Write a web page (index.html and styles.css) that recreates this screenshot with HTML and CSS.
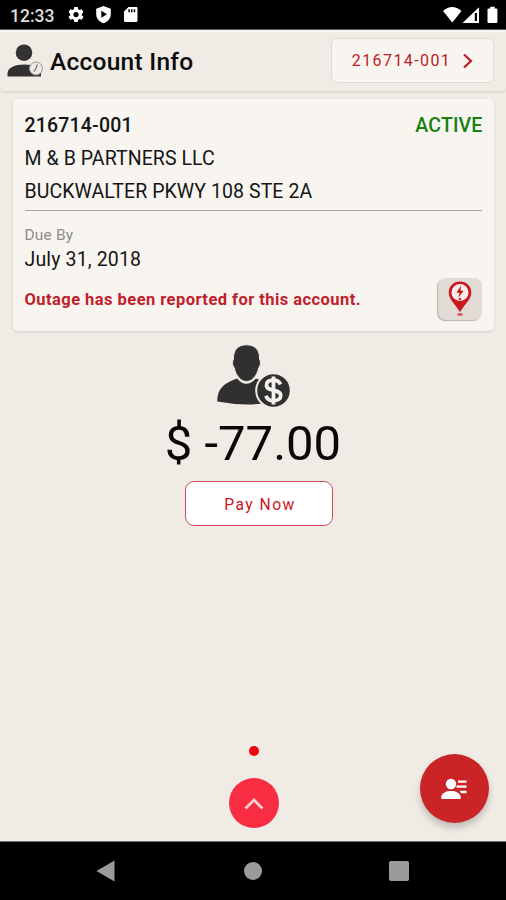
FILE: index.html
```html
<!DOCTYPE html>
<html lang="en">
<head>
<meta charset="utf-8">
<title>Account Info</title>
<link rel="stylesheet" href="styles.css">
</head>
<body>
<div class="status">
  <span class="clock">12:33</span>
  <svg class="status-left" width="72" height="18" viewBox="0 0 72 18" fill="#fff">
    <path fill-rule="evenodd" d="M6.3 1h3.4l.5 2.2 1.3.8 2.2-.8 1.8 3-1.7 1.5v1.6l1.7 1.5-1.8 3-2.2-.7-1.3.7-.5 2.3H6.3l-.5-2.3-1.3-.7-2.2.7-1.8-3 1.700-1.500V7.700L.5 6.200l1.800-3 2.200.8 1.300-.8zM8 6a2.600 2.600 0 1 0 0 5.200A2.600 2.600 0 0 0 8 6z"/>
    <path fill-rule="evenodd" d="M35.500 0 42.800 2.800V8c0 4.500-3 7.800-7.300 9.300C31.200 15.800 28.200 12.500 28.200 8V2.800zM33.300 4.800v7l5.700-3.500z"/>
    <path fill-rule="evenodd" d="M60.500 1h7.700q1.300 0 1.300 1.300v12.400q0 1.300-1.300 1.300H57.300Q56 16 56 14.700V5.500zM60.300 3.300v3h1.500v-3zm2.700 0v3h1.500v-3zm2.700 0v3h1.500v-3z"/>
  </svg>
  <svg class="status-right" width="56" height="18" viewBox="0 0 56 18" fill="#fff">
    <path d="M0 5Q9-3 18.500 5L9.300 16.500z"/>
    <path fill-rule="evenodd" d="M36 1.300V17H19.500zM31.800 7v8H34V7z"/>
    <path d="M47.200.8h4.500v1.700h1.700q1 0 1 1v12.500q0 1-1 1h-7.900q-1 0-1-1V3.500q0-1 1-1h1.700z"/>
  </svg>
</div>
<header class="bar">
  <svg class="bar-icon" width="37" height="34" viewBox="0 0 37 34">
    <circle cx="17" cy="8.700" r="8.300" fill="#333"/>
    <path d="M.5 32.500V29C1 23.500 8 20.500 17 20.500S33.500 23.500 34 29v3.500z" fill="#303030"/>
    <circle cx="29" cy="24.500" r="6.500" fill="#ece8e3" stroke="#9a9691" stroke-width="1"/>
    <path d="M30.300 20.500 28.700 25.200 26.800 27.500" fill="none" stroke="#77736f" stroke-width="1.200"/>
  </svg>
  <h1>Account Info</h1>
  <button class="account">216714-001
    <svg width="10" height="16" viewBox="0 0 10 16" fill="none" stroke="#bd1b24" stroke-width="2.200"><path d="M1 1.500 8 8 1 14.500"/></svg>
  </button>
</header>
<main>
  <section class="card">
    <div class="row"><b class="number">216714-001</b><b class="active">ACTIVE</b></div>
    <p class="line name">M &amp; B PARTNERS LLC</p>
    <p class="line address">BUCKWALTER PKWY 108 STE 2A</p>
    <div class="due">Due By</div>
    <div class="date">July 31, 2018</div>
    <div class="outage">
      <b>Outage has been reported for this account.</b>
      <span class="pin">
        <svg width="24" height="36" viewBox="0 0 24 36">
          <path d="M12 .500C5.500.500.700 5.300.700 11.500.700 18 7 23 12 31 17 23 23.300 18 23.300 11.500 23.300 5.300 18.500.500 12 .500z" fill="#c81920"/>
          <circle cx="12" cy="11.500" r="8.500" fill="#f8ece8"/>
          <path d="M13 4.500 8.500 11.500l3 .5-1 4.500 5-6.500-3-.5z" fill="#c81920"/>
          <circle cx="12" cy="18" r="1.200" fill="#c81920"/>
          <ellipse cx="12" cy="33.500" rx="2.800" ry="1.300" fill="#d6474a"/>
        </svg>
      </span>
    </div>
  </section>
  <svg class="payer" width="76" height="66" viewBox="0 0 76 66">
    <path d="M1.300 57.500C1 45 8 39 21 34.500Q30 45 40 34.500C52 38 59 43 59 58Q30 63 1.300 57.500z" fill="#303030"/>
    <path d="M30.500.8C39 .8 44 6 43.500 15c1.500 2 1.300 7-.8 9C41 32 36 37.500 30.500 37.500S20 32 18.300 24c-2.100-2-2.300-7-.8-9C17 6 22 .8 30.500.8z" fill="#303030" stroke="#f0ebe5" stroke-width="1"/>
    <circle cx="57.500" cy="46.500" r="17.300" fill="#303030" stroke="#f0ebe5" stroke-width="2"/>
    <path d="M64.500 40.500C63 37 60 36.200 57.500 36.200c-4.500 0-7 2-7 5.100 0 7 14.200 3.200 14.200 10.200 0 3.200-2.700 5.300-7.200 5.300-3.500 0-6.500-1.500-7.500-5M57.500 32.500v28" fill="none" stroke="#f4f0eb" stroke-width="3.800"/>
  </svg>
  <div class="amount">$ -77.00</div>
  <button class="pay">Pay Now</button>
  <div class="bottom">
    <i class="dot"></i>
    <button class="up" aria-label="Expand">
      <svg width="20" height="13" viewBox="0 0 20 13" fill="none" stroke="#ffd0d4" stroke-width="2.800"><path d="M1.500 11.500 10 3l8.500 8.500"/></svg>
    </button>
  </div>
  <button class="fab" aria-label="Contacts">
    <svg width="26" height="22" viewBox="0 0 26 22" fill="#fff">
      <circle cx="10" cy="6" r="5.200"/>
      <path d="M.3 21v-2.500C1 15 5 13 10 13s9 2 9.700 5.500V21z"/>
      <path d="M17 2.500h8.500v2.200H17zM15.500 7.500h10v2.200h-10zM18.500 12.700h7v2.600h-5.300z"/>
    </svg>
  </button>
</main>
<nav>
  <svg width="20" height="22" viewBox="0 0 20 22" fill="#9b9b9b"><path d="M.5 11 18.500.5v21z"/></svg>
  <i class="home"></i>
  <i class="recent"></i>
</nav>
</body>
</html>
```
FILE: styles.css
```css
* { box-sizing: border-box; }
body {
  margin: 0;
  height: 900px;
  display: flex;
  flex-direction: column;
  overflow: hidden;
  background: #f0ebe5;
  color: #151515;
  font-family: Roboto, "Liberation Sans", sans-serif;
}
button { font-family: inherit; padding: 0; display: flex; align-items: center; justify-content: center; }
svg { display: block; flex: none; }
p, h1 { margin: 0; }
.status {
  height: 30px;
  flex: none;
  background: #000;
  border-bottom: 1px solid #444;
  display: flex;
  padding: 6px 7px 0 10px;
}
.clock { width: 58px; color: #ddd; font-size: 17.500px; line-height: 20px; font-weight: 500; white-space: nowrap; }
.status-right { margin-left: auto; }
.bar {
  height: 61px;
  flex: none;
  display: flex;
  align-items: center;
  padding: 0 12px 0 7px;
  border-radius: 0 0 4px 4px;
  box-shadow: inset 0 2px 1px #f8f5f1, 0 1px 3px #d2cdc7;
}
h1 { margin: 2px 0 0 6px; font-size: 24.500px; line-height: 30px; font-weight: 500; letter-spacing: .25px; color: #0c0c0c; white-space: nowrap; }
.account {
  width: 163px;
  height: 45px;
  margin-left: auto;
  gap: 12px;
  border: 1px solid #dfdad5;
  border-radius: 6px;
  background: #f8f5f1;
  color: #bd1b24;
  font-size: 16px;
  letter-spacing: 1.400px;
}
main {
  flex: 1;
  display: flex;
  flex-direction: column;
  align-items: center;
  position: relative;
}
.card {
  width: 481px;
  height: 232px;
  flex: none;
  margin-top: 8px;
  padding: 10px 12px;
  background: #f8f5f1;
  border-radius: 5px;
  box-shadow: 0 1px 3px #d2cdc7;
}
.row { display: flex; justify-content: space-between; font-size: 19.500px; line-height: 33px; }
.row b { font-weight: 500; }
.number { letter-spacing: .18px; }
.active { color: #16800f; letter-spacing: .15px; margin-right: -1px; }
.line { font-size: 19.500px; line-height: 33px; letter-spacing: .08px; white-space: nowrap; }
.address { height: 36px; border-bottom: 1px solid #aaa6a2; }
.due { margin-top: 14px; font-size: 15.500px; line-height: 20px; letter-spacing: .15px; color: #8f8c89; }
.date { font-size: 19.500px; line-height: 29px; letter-spacing: .15px; }
.outage { height: 42px; margin-top: 4px; display: flex; align-items: center; justify-content: space-between; color: #c1202a; font-size: 16.500px; letter-spacing: .45px; white-space: nowrap; }
.pin { width: 44px; height: 42px; display: flex; align-items: center; justify-content: center; border-radius: 8px; background: #e2dbd5; box-shadow: -1px 1px 1px #b9b3ad; }
.payer { margin: 13px 0 0 2px; }
.amount { margin-top: 6px; font-size: 49px; line-height: 56px; color: #080808; white-space: nowrap; }
.pay {
  width: 148px;
  height: 45px;
  flex: none;
  margin: 9px 0 0 12px;
  padding: 2px 0 0 2px;
  border: 1px solid #ce4b5c;
  border-radius: 9px;
  background: #fff;
  color: #c9161f;
  font-size: 15.700px;
  letter-spacing: 1.450px;
}
.bottom { margin: auto 0 13px 1px; display: flex; flex-direction: column; align-items: center; }
.dot { width: 10px; height: 10px; border-radius: 50%; background: #f00010; }
.up { width: 50px; height: 50px; margin-top: 22px; border: 0; border-radius: 50%; background: #f82d42; }
.fab {
  position: absolute;
  right: 17.500px;
  bottom: 18px;
  width: 69px;
  height: 69px;
  border: 0;
  border-radius: 50%;
  background: #cb2427;
  box-shadow: 0 5px 7px rgba(0, 0, 0, .2);
}
nav { height: 59px; flex: none; display: flex; justify-content: space-between; align-items: center; padding: 0 97px 0 96px; background: #000; border-top: 1px solid #777; }
.home { width: 18px; height: 18px; border-radius: 50%; background: #9b9b9b; }
.recent { width: 20px; height: 20px; border-radius: 2px; background: #9b9b9b; }
```
